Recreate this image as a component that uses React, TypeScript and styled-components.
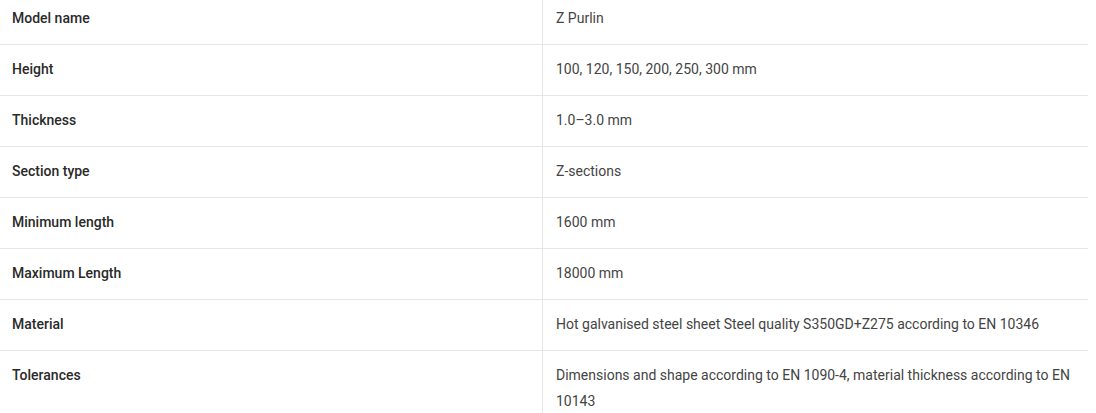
import React from "react";
import styled, { createGlobalStyle } from "styled-components";

const Global = createGlobalStyle`
  html, body { margin: 0; padding: 0; background: #fff; }
  body { font-family: Roboto, "Liberation Sans", Arial, sans-serif; overflow: hidden; }
`;

const Table = styled.table`
  width: 1088px;
  border-collapse: collapse;
  margin-top: -6px;
  font-size: 14px;
  line-height: 26px;
`;

const Row = styled.tr`
  border-top: 1px solid #e6e6e6;
  &:first-child { border-top: none; }
`;

const Label = styled.td`
  width: 518px;
  padding: 11px 12px 13px;
  font-weight: 500;
  color: #2a2a2a;
  vertical-align: top;
`;

const Value = styled.td`
  padding: 11px 12px 13px 13px;
  border-left: 1px solid #e6e6e6;
  color: #444;
  vertical-align: top;
`;

const rows: [string, string][] = [
  ["Model name", "Z Purlin"],
  ["Height", "100, 120, 150, 200, 250, 300 mm"],
  ["Thickness", "1.0–3.0 mm"],
  ["Section type", "Z-sections"],
  ["Minimum length", "1600 mm"],
  ["Maximum Length", "18000 mm"],
  ["Material", "Hot galvanised steel sheet Steel quality S350GD+Z275 according to EN 10346"],
  ["Tolerances", "Dimensions and shape according to EN 1090-4, material thickness according to EN 10143"],
];

export default function App() {
  return (
    <>
      <Global />
      <Table>
        <tbody>
          {rows.map(([k, v]) => (
            <Row key={k}>
              <Label>{k}</Label>
              <Value>{v}</Value>
            </Row>
          ))}
        </tbody>
      </Table>
    </>
  );
}
